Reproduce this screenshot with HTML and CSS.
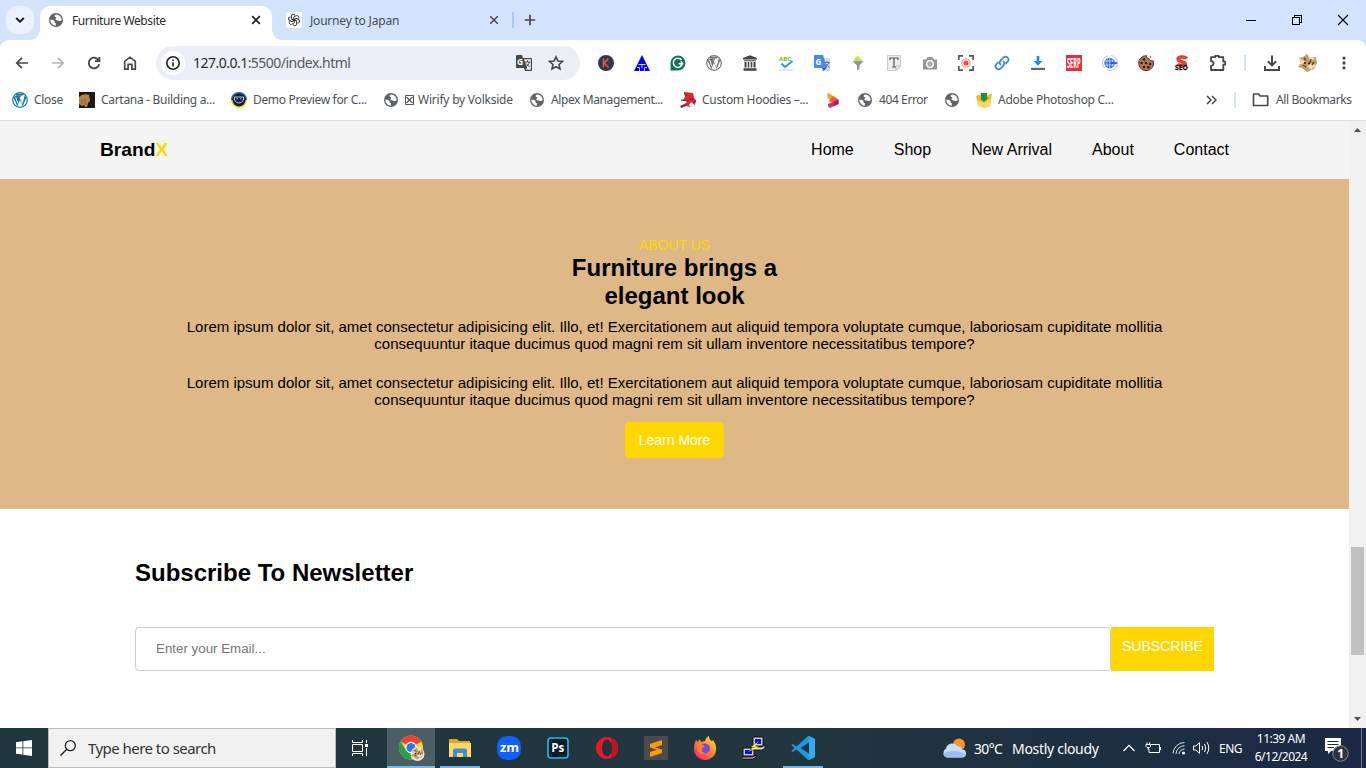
FILE: index.html
```
<!DOCTYPE html>
<html lang="en">
<head>
<meta charset="utf-8">
<title>Furniture Website</title>
<link rel="stylesheet" href="styles.css">
</head>
<body>
<svg class="defs" aria-hidden="true">
  <symbol id="globe" viewBox="0 0 16 16">
    <circle cx="8" cy="8" r="7" fill="#5f6368"/>
    <path d="M8.6 2.4C7 2.6 6.400 3.300 6.600 4.200 6.800 5 8 4.700 8.300 5.600 8.600 6.500 7.200 6.500 7.400 7.500 7.600 8.500 9.500 8.100 10.500 8.700 11.600 9.200 13 8.900 13.700 8.300 13.700 5.200 11.400 2.600 8.600 2.400ZM2.300 7.600C3.500 8 5 7.800 6 8.600 7 9.400 6.100 10.200 7 10.800 8.200 11.400 8.400 12 7.500 13.700 4.300 13.400 2.200 10.700 2.300 7.600Z" fill="#fff"/>
  </symbol>
  <symbol id="wp" viewBox="0 0 16 16">
    <circle cx="8" cy="8" r="7.300" fill="none" stroke="currentColor" stroke-width="1.200"/>
    <path d="M1.600 5.500 5.300 14.300 8 8 10.700 14.300 14.300 5.500 12.500 3.200 12 6.500 10.700 11 8.300 4.500H9.200V3.800H3.200ZM4 1.800H12L11 3.500H4Z" fill="currentColor"/>
    <path d="M3.600 4.900 5.900 11.400M7.900 4.900 10.400 11.600" stroke="#fff" stroke-width="1"/>
  </symbol>
  <symbol id="cat" viewBox="0 0 20 18">
    <path d="M1 4 5 3 9 0 12 4 18 3 19 9 16 15 9 18 4 14 0 13 3 9Z" fill="#c59c6a"/>
    <path d="M2 4 7 8 3 11M10 2 12 7 17 5M9 12 14 9 18 11 13 16Z" fill="#eadcc0"/>
    <path d="M6 4 8 6M5 11 8 13M13 5 12 9M16 8 14 11" stroke="#60452c" stroke-width="1.500"/>
    <circle cx="7" cy="9" r="1" fill="#2c2119"/><circle cx="11" cy="9.500" r="1" fill="#2c2119"/>
  </symbol>
</svg>

<div class="tabstrip">
  <div class="tabsearch"><svg width="10" height="6" viewBox="0 0 10 6"><path d="M1.200 1 5 4.700 8.800 1" class="ln dark" stroke-width="2"/></svg></div>
  <div class="tab active">
    <svg class="i16"><use href="#globe"/></svg>
    <span class="tabtitle t-furn">Furniture Website</span>
    <svg class="x" viewBox="0 0 10 10"><path d="M1.200 1.200 8.800 8.800M8.800 1.200 1.200 8.800" class="ln dark" stroke-width="1.700"/></svg>
  </div>
  <div class="tab second">
    <svg class="i16" viewBox="0 0 16 16"><rect width="16" height="16" rx="2" fill="#fff"/><g transform="translate(1.200 1.200) scale(.85)" fill="none" stroke="#333" stroke-width="1.150"><path id="petal" d="M7.500 8.800V4.700L10.500 3C12.700 2 14.500 4.400 13.200 6.300"/><use href="#petal" transform="rotate(60 8 8)"/><use href="#petal" transform="rotate(120 8 8)"/><use href="#petal" transform="rotate(180 8 8)"/><use href="#petal" transform="rotate(240 8 8)"/><use href="#petal" transform="rotate(300 8 8)"/></g></svg>
    <span class="tabtitle t-jour">Journey to Japan</span>
    <svg class="x" viewBox="0 0 10 10"><path d="M1.200 1.200 8.800 8.800M8.800 1.200 1.200 8.800" class="ln" stroke-width="1.500"/></svg>
  </div>
  <i class="vsep tabsep"></i>
  <svg class="plus" viewBox="0 0 12 12"><path d="M6 .8V11.200M.8 6H11.200" class="ln" stroke-width="1.700"/></svg>
  <div class="winctl">
    <svg viewBox="0 0 46 40" shape-rendering="crispEdges"><path d="M18 20.500H28" stroke="#000"/></svg>
    <svg viewBox="0 0 46 40" shape-rendering="crispEdges"><path d="M18.500 17.500H25.500V24.500H18.500ZM20.500 17V15.500H27.500V22.500H26" fill="none" stroke="#000"/></svg>
    <svg viewBox="0 0 46 40"><path d="M18 15 28 25M28 15 18 25" stroke="#000" stroke-width="1.100"/></svg>
  </div>
</div>

<div class="chrome">
  <div class="toolbar">
    <div class="slot"><svg class="i16" viewBox="0 0 16 16"><path d="M14 8H3M8 2.800 2.800 8 8 13.200" class="ln" stroke-width="1.700"/></svg></div>
    <div class="slot"><svg class="i16" viewBox="0 0 16 16"><path d="M2 8H13M8 2.800 13.200 8 8 13.200" class="ln pale" stroke-width="1.700"/></svg></div>
    <div class="slot"><svg class="i16" viewBox="0 0 16 16"><path d="M12.600 5.300A5.300 5.300 0 1 0 13.200 9.200M13.400 1.900V6.200H9" class="ln" stroke-width="1.800"/></svg></div>
    <div class="slot"><svg class="i16" viewBox="0 0 16 16"><path d="M2.700 6.300 8 2.200 13.300 6.300V14.200H9.900V9.300H6.100V14.200H2.700Z" class="ln" stroke-width="1.700"/></svg></div>
    <div class="omnibox">
      <div class="info"><svg class="i16" viewBox="0 0 16 16"><circle cx="8" cy="8" r="6.200" class="ln dark" stroke-width="1.600"/><path d="M8 7.200V11.500M8 4.400V6" stroke="#1f1f1f" stroke-width="1.600"/></svg></div>
      <span class="url"><b>127.0.0.1</b>:5500/index.html</span>
      <svg class="i16 translate" viewBox="0 0 16 16"><path d="M0 1Q0 0 1 0H6L7 3H15Q16 3 16 4V15Q16 16 15 16H9L8 13H1Q0 13 0 12Z" fill="#474747"/><path d="M8 4.200H14.800V14.800H9.800L11 13Z" fill="#eceef7"/><text x="1" y="9.600" class="mini" fill="#fff" font-size="8.500">G</text><path d="M9 7H14M11.500 5.500V7M13.300 7C13 9 11.500 11 9.800 12M10 8.500 13.500 12" stroke="#474747" fill="none"/></svg>
      <svg class="i16" viewBox="0 0 16 16"><path d="M8 1.800 9.900 6 14.400 6.500 11 9.500 12 14 8 11.700 4 14 5 9.500 1.600 6.500 6.100 6Z" class="ln" stroke-width="1.600"/></svg>
    </div>
    <div class="exts">
      <div class="slot"><svg class="i16" viewBox="0 0 16 16"><circle cx="8" cy="8" r="8" fill="#2c3a47"/><path d="M5.500 3.500V12.500M10.300 3.500 6.300 8.300 10.600 12.500" stroke="#f0514a" fill="none" stroke-width="1.600"/></svg></div>
      <div class="slot"><svg class="i16" viewBox="0 0 16 16"><path d="M8 0 16 16H0Z" fill="#00f"/><path d="M4.500 9.500H11.500M3 12.500H5.500V16M13 12.500H10.500V16M8 9.500V13" fill="none" stroke="#fff" stroke-width=".8"/></svg></div>
      <div class="slot"><svg class="i16" viewBox="0 0 16 16"><path d="M8 .5A7.400 7.400 0 1 1 8 15.500H.5V8A7.500 7.500 0 0 1 8 .5Z" fill="#0f7358"/><path d="M11.600 5A4.600 4.600 0 1 0 12.400 8.800H8.500M10.800 6.500 12.600 8.700 10.500 11" fill="none" stroke="#fff" stroke-width="1.500"/></svg></div>
      <div class="slot"><svg class="i16 grey"><use href="#wp"/></svg></div>
      <div class="slot"><svg class="i16" viewBox="0 0 16 16"><path d="M1 4.500V3L8 .3 15 3V4.500ZM2 5.300H14V6.300H2ZM2.500 7H4.500V12.500H2.500ZM5.700 7H7.300V12.500H5.700ZM8.700 7H10.300V12.500H8.700ZM11.500 7H13.500V12.500H11.500ZM1.500 13.200H14.500V15.700H1.500Z" fill="#444"/></svg></div>
      <div class="slot"><svg class="i16" viewBox="0 0 16 16"><text x="1" y="5.500" class="mini" fill="#73b82c" font-size="6">ABC</text><path d="M3.500 8.500 7 12 14.500 6" fill="none" stroke="#3d9cc4" stroke-width="2.200"/><path d="M1 15H15" stroke="#ccc"/></svg></div>
      <div class="slot"><svg class="i16" viewBox="0 0 16 16"><path d="M6 3H16V16H8Z" fill="#d5d9df"/><path d="M0 1Q0 0 1 0H9L13 13H1Q0 13 0 12Z" fill="#4688f1"/><path d="M8 13H12.700L9.500 16Z" fill="#3064ce"/><text x="1.500" y="9.500" class="mini" fill="#fff" font-size="8">G</text><path d="M11 7.500H16M13 6V7.500M15 7.500 12 12M12 9 15.500 13" stroke="#66777e" fill="none"/></svg></div>
      <div class="slot"><svg class="i16" viewBox="0 0 16 16"><path d="M4 4 8 .5 11.500 5 9.500 9H6Z" fill="#d7df3d"/><path d="M2.500 6H13.500L9.500 10.500V14L7 15.500V10.500Z" fill="#87989a"/><path d="M4 5.800H12" stroke="#b4c9bd"/></svg></div>
      <div class="slot"><svg class="i16" viewBox="0 0 16 16"><path d="M1.500.5H14.500V11L10 15.500H1.500Z" fill="#eee" stroke="#ccc"/><path d="M10 15.500V11H14.500Z" fill="#fff" stroke="#bbb"/><path d="M4 5V3H12V5M8 3V12M6 12H10" fill="none" stroke="#555" stroke-width="1.200"/></svg></div>
      <div class="slot"><svg class="i16" viewBox="0 0 16 16"><path d="M1 4.500H4L5.500 2H10.500L12 4.500H15V14.500H1Z" fill="#969696"/><circle cx="8" cy="9" r="3.300" fill="#aaa" stroke="#fff" stroke-width="1.300"/></svg></div>
      <div class="slot"><svg class="i16" viewBox="0 0 16 16"><path d="M.8 5V.8H5M11 .8H15.200V5M15.200 11V15.200H11M5 15.200H.8V11" fill="none" stroke="#555" stroke-width="1.700"/><circle cx="8" cy="8" r="2.600" fill="#f04b43"/><circle cx="8" cy="8" r="4.200" fill="none" stroke="#f3877f"/></svg></div>
      <div class="slot"><svg class="i16" viewBox="0 0 16 16"><g fill="none" stroke="#3f83f0" stroke-width="1.800" stroke-linecap="round"><path d="M6.500 9.500A3 3 0 0 1 6.500 5.500L9.800 2.200A3 3 0 0 1 14 6.300L12 8.300"/><path d="M9.500 6.500A3 3 0 0 1 9.500 10.500L6.200 13.800A3 3 0 0 1 2 9.700L4 7.700"/></g></svg></div>
      <div class="slot"><svg class="i16" viewBox="0 0 16 16"><path d="M6.700 1H9.300V6H12.500L8 10.700 3.500 6H6.700Z" fill="#1b8df2"/><path d="M1 12.800H15V15H1Z" fill="#666"/></svg></div>
      <div class="slot"><svg class="i16 serp" viewBox="0 0 16 16"><rect width="16" height="16" fill="#e8303a"/><g transform="translate(.9 13) scale(.58 1.400)"><text x="0" y="0" class="mini" fill="#fff" font-size="9.800">SERP</text></g></svg></div>
      <div class="slot"><svg class="i16" viewBox="0 0 16 16"><circle cx="8" cy="8" r="7.500" fill="none" stroke="#9bb9f7" stroke-width=".8" stroke-dasharray="15 3"/><circle cx="7.700" cy="8" r="5.300" fill="#2461ed"/><path d="M3 6H12.500M3 10H12.500M7.700 3V13M5.500 3.500Q4 8 5.500 12.500M10 3.500Q11.500 8 10 12.500" fill="none" stroke="#fff" stroke-width=".6"/><path d="M10 7.200H15V9H10Z" fill="#2461ed"/></svg></div>
      <div class="slot"><svg class="i16" viewBox="0 0 16 16"><path d="M8.500.7C8.500 3 10 3.500 11 3.500 11.500 5.500 13.300 6 15.300 6A7.500 7.500 0 1 1 8.500.7Z" fill="#b77350" stroke="#51301f" stroke-width="1"/><g fill="#23130d"><circle cx="6" cy="4.500" r="1.200"/><circle cx="3.500" cy="8" r="1.200"/><circle cx="8" cy="8" r="1.300"/><circle cx="12" cy="9" r="1.200"/><circle cx="6" cy="12" r="1.200"/><circle cx="10.300" cy="12.200" r="1.200"/></g><circle cx="12.500" cy="2" r=".8" fill="#51301f"/></svg></div>
      <div class="slot"><svg class="i16" viewBox="0 0 16 16"><path d="M12.500 3.800C11.500 1.700 4.500 1 4 4 4 7.500 12 6.500 11.500 9.500 11 11 5 11 3.500 9" fill="none" stroke="#e34133" stroke-width="3.400"/><text x="1" y="15.200" class="mini" fill="#161212" stroke="#161212" stroke-width=".3" font-size="6.800">SEO</text></svg></div>
      <div class="slot"><svg class="i18" viewBox="0 0 18 18"><path d="M2 3.200H6.200V1.800H9.800V3.200H14.300V7.700H16.200V10.700H14.300V16H2V11.800Q4.500 11.500 4.500 9.500 4.500 7.500 2 7.200Z" class="ln" stroke-width="1.800" stroke-linejoin="round"/></svg></div>
    </div>
    <i class="vsep extsep"></i>
    <div class="slot"><svg class="i18" viewBox="0 0 18 18"><path d="M9 1.500V11M4.800 7.300 9 11.400 13.200 7.300M2 12V16H16V12" class="ln" stroke-width="2"/></svg></div>
    <div class="slot"><svg width="20" height="18"><use href="#cat"/></svg></div>
    <div class="slot"><svg class="i16" viewBox="0 0 16 16"><path d="M6.600 1.700H9.400V4.500H6.600ZM6.600 6.600H9.400V9.400H6.600ZM6.600 11.500H9.400V14.300H6.600Z" fill="#474747"/></svg></div>
  </div>

  <div class="bookmarks">
    <div class="bm"><svg class="i16 blue"><use href="#wp"/></svg><span class="w1">Close</span></div>
    <div class="bm"><svg class="i16" viewBox="0 0 16 16"><rect width="16" height="16" fill="#1d1916"/><path d="M0 5Q4 1 10 3L11 9 9 11 8 15H6L5 13 3 14 0 12Z" fill="#b9824d"/><path d="M3 7V12M6 6V13" stroke="#94653c"/></svg><span class="w2">Cartana - Building a...</span></div>
    <div class="bm"><svg class="i16" viewBox="0 0 16 16"><circle cx="8" cy="8" r="8" fill="#f6d51b"/><path d="M0 8A8 8 0 0 1 16 8" fill="#1a61b9"/><circle cx="8" cy="8" r="6.500" fill="#101d39"/><path d="M3.500 5H12.500V8Q11 11 8 11 5 11 3.500 8ZM5.500 6.800H7M9 6.800H10.500" fill="none" stroke="#b9cddd"/></svg><span class="w3">Demo Preview for C...</span></div>
    <div class="bm"><svg class="i16"><use href="#globe"/></svg><span class="w4"><svg class="box" viewBox="0 0 10 10"><path d="M0.500 0.500H8.500V9.500H0.500Z" fill="none" stroke="#555" stroke-width="1"/><path d="M1.500 2 7.500 8M7.500 2 1.500 8" fill="none" stroke="#555" stroke-width="1.200"/></svg>Wirify by Volkside</span></div>
    <div class="bm"><svg class="i16"><use href="#globe"/></svg><span class="w5">Alpex Management...</span></div>
    <div class="bm"><svg class="i16" viewBox="0 0 16 16"><path d="M4 0 13 1 14 6 16 8 15 13 11 10 9 13 11 15 6 14 1 16 0 14 6 11 7 9 3 8 5 5Z" fill="#dc2535"/><path d="M4 1 7 4M13 6 9 8M1 15 6 13M13 11 16 9M1 8 8 9" fill="none" stroke="#472536"/></svg><span class="w6">Custom Hoodies –...</span></div>
    <div class="bm"><svg class="i16" viewBox="0 0 16 16"><path d="M2.500.5 8 4 8 9 2.500 6Z" fill="#ff9d14"/><path d="M8 4 13.500 7.500 8 11 4 9Z" fill="#ff552e"/><path d="M13.500 7.500V12L5 16 3 14V12L8 10Z" fill="#df2861"/><path d="M13.500 7.500V12L9 14V9.500Z" fill="#84298c"/></svg></div>
    <div class="bm"><svg class="i16"><use href="#globe"/></svg><span class="w7">404 Error</span></div>
    <div class="bm"><svg class="i16"><use href="#globe"/></svg></div>
    <div class="bm"><svg class="i16" viewBox="0 0 16 16"><path d="M0 4 5 2 7 6 16 1 14 14 8 16 2 13Z" fill="#f4b72e"/><path d="M1 8 8 11 15 7 14 14 8 16 2 13Z" fill="#fbd767"/><path d="M5 1H11V5.500H12.500L8 10 4 6.500H5Z" fill="#119447"/></svg><span class="w8">Adobe Photoshop C...</span></div>
    <div class="bmright">
      <svg class="more" viewBox="0 0 11 10"><path d="M1 1 5 5 1 9M6 1 10 5 6 9" class="ln" stroke-width="1.500"/></svg>
      <i class="vsep"></i>
      <svg class="folder" viewBox="0 0 17 14"><path d="M1.500 1H6.500L8.200 3H15.700V12.500H1.500Z" class="ln" stroke-width="1.600" stroke-linejoin="round"/></svg>
      <span class="w9">All Bookmarks</span>
    </div>
  </div>
</div>

<div class="viewport">
  <div class="page">
    <header class="site-header">
      <div class="brand">Brand<span>X</span></div>
      <nav><a>Home</a><a>Shop</a><a>New Arrival</a><a>About</a><a>Contact</a></nav>
    </header>
    <section class="about">
      <div class="eyebrow">ABOUT US</div>
      <h2>Furniture brings a<br>elegant look</h2>
      <p>Lorem ipsum dolor sit, amet consectetur adipisicing elit. Illo, et! Exercitationem aut aliquid tempora voluptate cumque, laboriosam cupiditate mollitia<br>consequuntur itaque ducimus quod magni rem sit ullam inventore necessitatibus tempore?</p>
      <p>Lorem ipsum dolor sit, amet consectetur adipisicing elit. Illo, et! Exercitationem aut aliquid tempora voluptate cumque, laboriosam cupiditate mollitia<br>consequuntur itaque ducimus quod magni rem sit ullam inventore necessitatibus tempore?</p>
      <a class="learn">Learn More</a>
    </section>
    <section class="newsletter">
      <h2>Subscribe To Newsletter</h2>
      <div class="form"><input type="text" placeholder="Enter your Email..."><a class="subscribe">SUBSCRIBE</a></div>
    </section>
  </div>
  <div class="scrollbar">
    <svg viewBox="0 0 17 17"><path d="M5 11 8.500 7 12 11Z" fill="#505050"/></svg>
    <div class="thumb"></div>
    <svg viewBox="0 0 17 17"><path d="M5 6 8.500 10 12 6Z" fill="#505050"/></svg>
  </div>
</div>

<div class="taskbar">
  <div class="start"><svg class="i16" viewBox="0 0 16 16"><path d="M0 2.200 6.500 1.300V7.500H0ZM7.300 1.200 16 0V7.500H7.300ZM0 8.300H6.500V14.600L0 13.700ZM7.300 8.300H16V16L7.300 14.700Z" fill="#fff"/></svg></div>
  <div class="search"><svg class="i16" viewBox="0 0 16 16"><circle cx="10.300" cy="5.700" r="5" fill="none" stroke="#222" stroke-width="1.300"/><path d="M6.800 9.300.5 15.600" stroke="#222" stroke-width="1.400"/></svg><span>Type here to search</span></div>
  <div class="tview"><svg class="i16" viewBox="0 0 16 16"><path d="M.5 0V2.500H10.500V0M.5 16V13.500H10.500V16M.5 4.500H10.500V11.500H.5ZM14.500 0V3M14.500 8V16" fill="none" stroke="#fff" stroke-width="1"/><path d="M13 4H16V7H13Z" fill="#fff"/></svg></div>
  <div class="apps">
    <div class="app cur"><svg class="i26" viewBox="0 0 26 26"><circle cx="12" cy="12.500" r="12" fill="#fdd035"/><path d="M12 12.500 1.600 6.500A12 12 0 0 1 22.400 6.500Z" fill="#e84436"/><path d="M1.600 6.500A12 12 0 0 0 12 24.500L16 15 7 15Z" fill="#26a04a"/><circle cx="12" cy="12.500" r="5.700" fill="#fff"/><circle cx="12" cy="12.500" r="4.500" fill="#2f75e9"/><circle cx="18.500" cy="19" r="7" fill="#ece5da"/><use href="#cat" x="12" y="12" width="13" height="13"/></svg></div>
    <div class="app run"><svg class="i24" viewBox="0 0 24 24"><path d="M1 3H9L11 5H22V8H1Z" fill="#e4a31b"/><path d="M1 7H23V21H1Z" fill="#ffd766"/><path d="M5 21V14Q5 12.500 6.500 12.500H17.500Q19 12.500 19 14V21H15V17H9V21Z" fill="#3b91d3"/></svg></div>
    <div class="app"><svg class="i24" viewBox="0 0 24 24"><rect width="24" height="24" rx="10" fill="#1061fb"/><text x="3" y="15.800" font-size="13" class="mini" fill="#fff">zm</text></svg></div>
    <div class="app"><svg class="i24" viewBox="0 0 24 24"><rect x="2" y="2" width="20" height="20" rx="3" fill="#071c2a" stroke="#2ab9e6" stroke-width="1.600"/><text x="5.300" y="16" font-size="11.500" class="mini" fill="#fff">Ps</text></svg></div>
    <div class="app"><svg class="i24" viewBox="0 0 24 24"><ellipse cx="12" cy="12" rx="11" ry="11" fill="#ed172c"/><path d="M16 1.700Q23 4 23 12T16 22.300Z" fill="#c40f25"/><ellipse cx="12" cy="12" rx="5" ry="8.500" fill="#21343e"/></svg></div>
    <div class="app"><svg class="i24" viewBox="0 0 24 24"><rect width="24" height="24" rx="1" fill="#4b4b4b"/><path d="M6 8 18 4V9L11 11.500 18 13.500V17L6 21V16L13 13.800 6 11.500Z" fill="#ff9a0b"/></svg></div>
    <div class="app"><svg class="i24" viewBox="0 0 24 24"><defs><linearGradient id="fx" x1="1" y1="0" x2=".2" y2="1"><stop stop-color="#ffe63c"/><stop offset=".45" stop-color="#ff9429"/><stop offset="1" stop-color="#f52567"/></linearGradient></defs><path d="M1 13C1 9 2 6 3 4L5 6 7 3 8 6 12 5Q13 1 16 0 16 4 19 5L20 4Q24 9 23 14A11 10.500 0 0 1 1 13Z" fill="url(#fx)"/><circle cx="12" cy="12.500" r="5" fill="#7949d8"/><path d="M4 8 10 9 12 11Q9 11 9 13Q8 17 13 17Q7 20 4 14Z" fill="#ff8130"/></svg></div>
    <div class="app"><svg class="i24" viewBox="0 0 24 24"><g stroke="#111"><path d="M11 1H21V10H11ZM1 12H12V20H1Z" fill="#ccc"/><path d="M9 11H20L23 9V12L20 14H9ZM0 21H11L14 19V21L11 23H0Z" fill="#ddd"/></g><path d="M13 3H19V8H13ZM3 14H10V18H3Z" fill="#0715d3"/><path d="M17 5 9 11 13 11 6 16 17 11 13 10Z" fill="#fff01a"/></svg></div>
    <div class="app run"><svg class="i24" viewBox="0 0 24 24"><path d="M17 0 24 3V21L17 24 5.500 13.500 2 16 .3 15 3.500 12 .3 9 2 8 5.500 10.500ZM18 6.500 9.500 12 18 17.500Z" fill="#2196df" fill-rule="evenodd"/><path d="M18 0 24 3V21L18 24Z" fill="#36a9f3"/></svg></div>
  </div>
  <div class="tray">
    <svg class="weather" viewBox="0 0 24 20"><circle cx="17" cy="6.500" r="6" fill="#fb9420"/><path d="M5 19.500A5 5 0 0 1 4 10.500 6.500 6.500 0 0 1 15.500 8 5.500 5.500 0 0 1 20 11.500 4 4 0 0 1 20 19.500Z" fill="#c9dcf9"/><path d="M5 19.500A5 5 0 0 1 1 15.500Q12 10 23 16A4 4 0 0 1 20 19.500Z" fill="#9dbef0"/></svg>
    <span class="temp">30°C</span><span class="cond">Mostly cloudy</span>
    <svg class="chev" viewBox="0 0 12 8"><path d="M.5 7 6 1.300 11.500 7" fill="none" stroke="#fff" stroke-width="1.200"/></svg>
    <svg class="batt" viewBox="0 0 16 12"><path d="M6 2.500H14.500V10.500H4V7.500M15.500 5V8M1 2.500H5.500V4.500L4.500 5.500H2L1 4.500ZM2 2.500V.5M4.500 2.500V.5M3.200 5.500V8" fill="none" stroke="#fff" stroke-width="1"/></svg>
    <svg class="wifi" viewBox="0 0 14 14"><path d="M1 12.500A11.500 11.500 0 0 1 12.500 1.500M4 13A8.500 8.500 0 0 1 12.500 4.700M7 13A5.500 5.500 0 0 1 12.500 8" fill="none" stroke="#dce2e7" stroke-width="1"/><circle cx="11.500" cy="12" r="1.500" fill="#fff"/></svg>
    <svg class="vol" viewBox="0 0 17 14"><path d="M.5 5H3L6.500 1.500V12.500L3 9H.5ZM9 4.800Q10.500 7 9 9.200M11.500 3Q14 7 11.500 11M14 1.200Q17.500 7 14 12.800" fill="none" stroke="#fff" stroke-width="1"/></svg>
    <span class="lang">ENG</span>
    <div class="clock"><span class="time">11:39 AM</span><span class="date">6/12/2024</span></div>
    <svg class="notif" viewBox="0 0 24 24"><path d="M0 0H16V13H6L3 16V13H0Z" fill="#fff"/><path d="M2.500 3.500H13.500M2.500 6.500H13.500M2.500 9.500H9" stroke="#1d2c44" stroke-width="1"/><circle cx="15.500" cy="15.500" r="7.700" fill="#30353d" stroke="#858b92"/><text x="12.300" y="20" font-size="12" class="mini" fill="#fff">1</text></svg>
    <i class="desk"></i>
  </div>
</div>
</body>
</html>
```
FILE: styles.css
```
* { box-sizing: border-box; }
body { margin: 0; width: 1366px; height: 768px; overflow: hidden; display: flex; flex-direction: column; font-family: "Noto Sans", "Open Sans", sans-serif; background: #fff; }
svg { display: block; flex: none; }
span { white-space: nowrap; }
.defs { width: 0; height: 0; position: absolute; }
.i16 { width: 16px; height: 16px; }
.i18 { width: 18px; height: 18px; }
.i24 { width: 24px; height: 24px; }
.i26 { width: 26px; height: 26px; }
.serp { overflow: visible; }
.ln { fill: none; stroke: #474747; }
.dark { stroke: #1f1f1f; }
.pale { stroke: #b4b4b4; }
.mini { font-family: "Open Sans", sans-serif; font-weight: 700; }
.grey { color: #777; }
.blue { color: #1674a2; }
.vsep { display: block; width: 2px; height: 16px; background: #d3e3fd; flex: none; }

.tabstrip { height: 40px; background: #d3e3fd; display: flex; align-items: center; padding-left: 6px; flex: none; }
.tabsearch { width: 28px; height: 28px; border-radius: 10px; background: #e9f1fe; display: flex; align-items: center; justify-content: center; margin-right: 6px; }
.tab { height: 34px; margin-top: 6px; display: flex; align-items: center; padding: 0 11px 6px 8px; }
.active { width: 232px; background: #fff; border-radius: 10px 10px 0 0; position: relative; }
.active::before, .active::after { content: ""; position: absolute; bottom: 0; width: 10px; height: 10px; }
.active::before { left: -10px; background: radial-gradient(circle at 0 0, transparent 9.500px, #fff 10px); }
.active::after { right: -10px; background: radial-gradient(circle at 100% 0, transparent 9.500px, #fff 10px); }
.second { width: 240px; padding: 0 13px 6px 14px; }
.tabtitle { font-size: 12px; line-height: 16px; margin: 2px 0 0 8px; color: #2c2c2c; }
.second .tabtitle { color: #474c53; }
.t-furn { letter-spacing: -.4px; }
.t-jour { letter-spacing: -.2px; }
.x { width: 10px; height: 10px; margin-left: auto; }
.tabsep { background: #a8c7fa; }
.plus { width: 12px; height: 12px; margin-left: 10px; }
.winctl { display: flex; margin-left: auto; }
.winctl svg { width: 46px; height: 40px; }

.chrome { height: 81px; flex: none; border-bottom: 1px solid #dedfe1; background: radial-gradient(circle at 8px 8px, #fff 7.500px, #d3e3fd 8px) 0 0 / 8px 8px no-repeat, radial-gradient(circle at 0 8px, #fff 7.500px, #d3e3fd 8px) 100% 0 / 8px 8px no-repeat, #fff; }
.toolbar { height: 46px; display: flex; align-items: center; padding-left: 4px; }
.slot { width: 36px; display: flex; justify-content: center; flex: none; }
.omnibox { width: 424px; height: 34px; border-radius: 17px; background: #eceef7; margin: 0 8px; display: flex; align-items: center; padding: 0 16px 0 5px; }
.info { width: 24px; height: 24px; border-radius: 50%; background: #fff; display: flex; align-items: center; justify-content: center; }
.url { font-size: 14px; line-height: 18px; margin: 0 0 1px 8px; color: #565a60; letter-spacing: -.52px; }
.url b { font-weight: 400; color: #2b2b2b; }
.translate { margin-left: auto; margin-right: 16px; }
.exts { display: flex; align-items: center; }
.extsep { margin: 0 8px; }

.bookmarks { height: 28px; display: flex; align-items: center; gap: 16px; padding-left: 12px; font-size: 12px; color: #4c5056; }
.bm { display: flex; align-items: center; gap: 6px; }
.bm span, .bmright span { line-height: 16px; }
.w1 { width: 29px; letter-spacing: -.3px; }
.w2 { width: 114px; letter-spacing: -.3px; }
.w3 { width: 114px; letter-spacing: -.33px; }
.w4 { width: 108px; letter-spacing: -.22px; display: flex; align-items: center; }
.w5 { width: 113px; letter-spacing: -.4px; }
.w6 { width: 107px; letter-spacing: -.3px; }
.w7 { width: 49px; letter-spacing: -.4px; }
.w8 { width: 116px; letter-spacing: -.28px; }
.w9 { width: 76px; letter-spacing: -.4px; }
.box { width: 10px; height: 10px; margin-right: 3px; }
.bmright { margin-left: auto; margin-right: 14px; display: flex; align-items: center; }
.more { width: 11px; height: 10px; margin-right: 17px; }
.folder { width: 17px; height: 14px; margin: 0 7px 0 16px; }

.viewport { height: 607px; display: flex; flex: none; font-family: "Liberation Sans", Arial, sans-serif; }
.page { width: 1349px; background: #fff; }
.site-header { height: 58px; background: #f4f4f4; display: flex; align-items: center; justify-content: space-between; padding: 0 120px 0 100px; }
.brand { font-size: 19.200px; font-weight: 700; color: #000; }
.brand span { color: gold; }
nav { display: flex; gap: 40px; font-size: 16px; line-height: 18px; color: #000; }
.about { height: 330px; background: #deb887; text-align: center; padding-top: 58px; white-space: nowrap; color: #000; }
.eyebrow { font-size: 14px; line-height: 17px; color: gold; }
h2 { font-size: 24px; line-height: 28px; margin: 0; color: #000; }
.about p { font-size: 15px; line-height: 17px; margin: 8px 0 22px; }
.about p + p { margin: 0 0 14px; }
.learn { display: inline-block; width: 99px; height: 36px; line-height: 36px; border-radius: 4px; background: gold; color: #fff; font-size: 14px; }
.newsletter { padding: 50px 135px 0; }
.form { display: flex; margin-top: 40px; height: 44px; }
.form input { flex: 1; border: 1px solid #ccc; border-radius: 4px; padding: 0 20px 2px; font: 13.333px "Liberation Sans", Arial, sans-serif; background: #fff; }
.form input::placeholder { color: #757575; }
.subscribe { width: 103px; background: gold; color: #fff; font-size: 14px; text-align: center; line-height: 16px; padding-top: 11px; }
.scrollbar { width: 17px; background: #f1f1f1; display: flex; flex-direction: column; align-items: center; }
.scrollbar svg { width: 17px; height: 17px; }
.thumb { width: 13px; height: 108px; background: #c1c1c1; margin: 409px 0 auto; }

.taskbar { height: 40px; flex: none; background: linear-gradient(90deg, #20363e 0, #21363f 60%, #1e2f42 78%, #1b2944 100%); display: flex; color: #fff; }
.start { width: 48px; display: flex; align-items: center; justify-content: center; }
.search { width: 288px; background: #f1f1f1; border: 1px solid #bbb; display: flex; align-items: center; padding-left: 11px; gap: 12px; color: #333; font-size: 15px; }
.search span { letter-spacing: -.54px; }
.tview { width: 51px; display: flex; align-items: center; padding-left: 16px; }
.apps { display: flex; gap: 1px; }
.app { width: 48px; height: 40px; display: flex; align-items: center; justify-content: center; }
.cur { background: linear-gradient(#4a5e66 38px, #76b9ed 38px); padding-left: 2px; }
.run { background: linear-gradient(#76b9ed, #76b9ed) center bottom / 40px 2px no-repeat; }
.tray { margin-left: auto; display: flex; align-items: center; font-size: 14px; }
.weather { width: 24px; height: 20px; margin-right: 8px; }
.temp { width: 38px; letter-spacing: -.65px; }
.cond { width: 111px; letter-spacing: -.3px; }
.chev { width: 12px; height: 8px; margin-right: 10px; }
.batt { width: 16px; height: 12px; margin-right: 11px; }
.wifi { width: 14px; height: 14px; margin-right: 7px; }
.vol { width: 17px; height: 14px; margin-right: 9px; }
.lang { width: 24px; font-size: 12px; letter-spacing: -.5px; }
.clock { width: 76px; display: flex; flex-direction: column; align-items: center; font-size: 12px; line-height: 18px; }
.time { letter-spacing: -.5px; }
.date { letter-spacing: -.5px; }
.notif { width: 24px; height: 24px; margin: 4px 12px 0 6px; }
.desk { width: 5px; height: 40px; border-left: 1px solid #6b7687; }
```
